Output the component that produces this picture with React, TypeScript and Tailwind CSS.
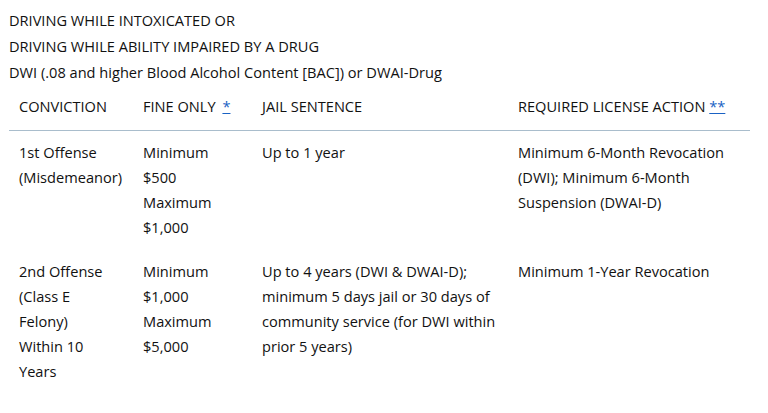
const rows = [
    {
        conviction: ["1st Offense", "(Misdemeanor)"],
        fine: ["Minimum", "$500", "Maximum", "$1,000"],
        jail: "Up to 1 year",
        license:
            "Minimum 6-Month Revocation (DWI); Minimum 6-Month Suspension (DWAI-D)",
    },
    {
        conviction: ["2nd Offense", "(Class E", "Felony)", "Within 10", "Years"],
        fine: ["Minimum", "$1,000", "Maximum", "$5,000"],
        jail: "Up to 4 years (DWI & DWAI-D); minimum 5 days jail or 30 days of community service (for DWI within prior 5 years)",
        license: "Minimum 1-Year Revocation",
    },
];

export default function App() {
    return (
        <div className="min-h-screen w-full bg-white pl-[9px] pt-[7px] text-[14.6px] text-[#111111] [font-family:'Open_Sans',sans-serif]">
            <div className="leading-[26px]">
                <div>DRIVING WHILE INTOXICATED OR</div>
                <div>DRIVING WHILE ABILITY IMPAIRED BY A DRUG</div>
                <div>DWI (.08 and higher Blood Alcohol Content [BAC]) or DWAI-Drug</div>
            </div>
            <table className="w-[741px] table-fixed border-collapse leading-[25px]">
                <colgroup>
                    <col className="w-[124px]" />
                    <col className="w-[119px]" />
                    <col className="w-[256px]" />
                    <col className="w-[242px]" />
                </colgroup>
                <thead>
                    <tr className="border-b border-[#a9bdcc] text-left">
                        <th className="px-[10px] pt-[9px] pb-[11px] font-normal">CONVICTION</th>
                        <th className="px-[10px] pt-[9px] pb-[11px] font-normal">
                            FINE ONLY{" "}
                            <a href="#" className="ml-[3px] text-[#1a62c4] underline">*</a>
                        </th>
                        <th className="px-[10px] pt-[9px] pb-[11px] font-normal">JAIL SENTENCE</th>
                        <th className="px-[10px] pt-[9px] pb-[11px] font-normal">
                            REQUIRED LICENSE ACTION{" "}
                            <a href="#" className="text-[#1a62c4] underline">**</a>
                        </th>
                    </tr>
                </thead>
                <tbody>
                    {rows.map((row, i) => (
                        <tr key={i} className="align-top">
                            <td className="px-[10px] pt-[9px] pb-[10px]">
                                {row.conviction.map((c) => (
                                    <div key={c}>{c}</div>
                                ))}
                            </td>
                            <td className="px-[10px] pt-[9px] pb-[10px]">
                                {row.fine.map((f) => (
                                    <div key={f}>{f}</div>
                                ))}
                            </td>
                            <td className="px-[10px] pt-[9px] pb-[10px]">{row.jail}</td>
                            <td className="px-[10px] pt-[9px] pb-[10px]">{row.license}</td>
                        </tr>
                    ))}
                </tbody>
            </table>
        </div>
    );
}
